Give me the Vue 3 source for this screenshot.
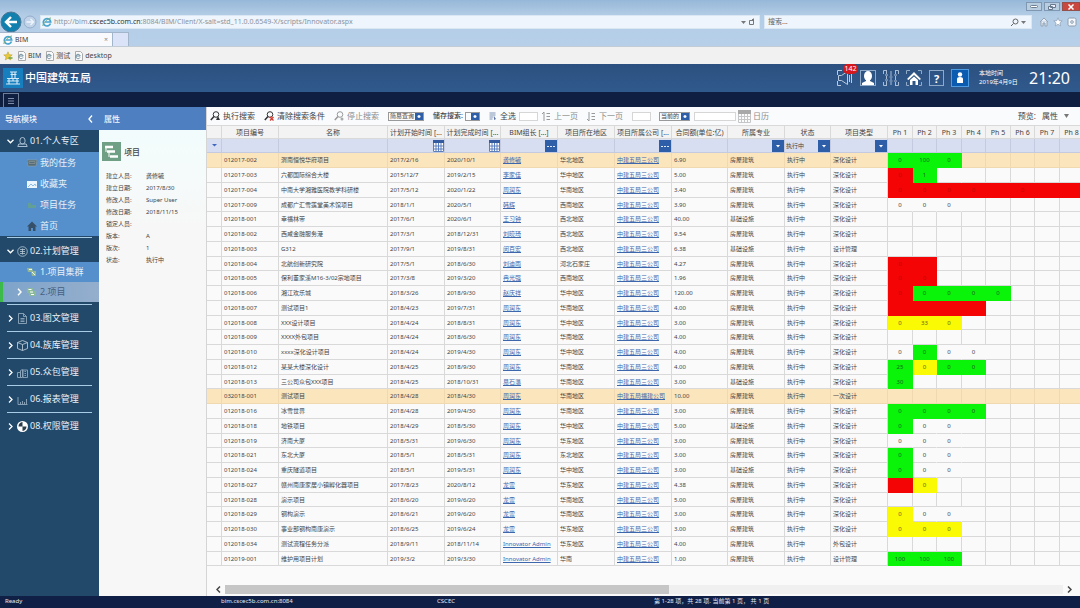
<script setup>
import { ref } from 'vue'

const query = ref('')
const currentStatus = ref('执行中')

const tasks = [
  { icon: 'inbox', label: '我的任务' },
  { icon: 'mail', label: '收藏夹' },
  { icon: 'leaf', label: '项目任务' },
  { icon: 'house', label: '首页' },
]

const modules = [
  { icon: 'doc', label: '03.图文管理' },
  { icon: 'cube', label: '04.族库管理' },
  { icon: 'city', label: '05.众包管理' },
  { icon: 'chart', label: '06.报表管理' },
  { icon: 'shield', label: '08.权限管理' },
]

const props = [
  ['建立人员:', '龚修毓'],
  ['建立日期:', '2017/8/30'],
  ['修改人员:', 'Super User'],
  ['修改日期:', '2018/11/15'],
  ['锁定人员:', ''],
  ['版本:', 'A'],
  ['版次:', '1'],
  ['状态:', '执行中'],
]

const columns = [
  { label: '', width: 15, filter: 'toggle' },
  { label: '项目编号', width: 57 },
  { label: '名称', width: 109 },
  { label: '计划开始时间 [...', width: 57, filter: 'date' },
  { label: '计划完成时间 [...', width: 56, filter: 'date' },
  { label: 'BIM组长 [...]', width: 57, filter: 'more' },
  { label: '项目所在地区', width: 57 },
  { label: '项目所属公司 [...', width: 57, filter: 'more' },
  { label: '合同额(单位:亿)', width: 56 },
  { label: '所属专业', width: 57, filter: 'list' },
  { label: '状态', width: 46, filter: 'status' },
  { label: '项目类型', width: 57, filter: 'list' },
  ...[25, 24, 25, 24, 25, 24, 25, 24].map((width, i) => ({ label: `Ph ${i + 1}`, width })),
]
const tableWidth = columns.reduce((sum, c) => sum + c.width, 0)

const H = '房屋建筑'
const J = '基础设施'
const S = '深化设计'
const C = '中建五局三公司'
// code, name, start, finish, leader, region, company, amount, discipline, type, phases
const rows = [
  ['012017-002', '渭南恒悦华府项目', '2017/2/16', '2020/10/1', '龚修毓', '华北地区', C, '6.90', H, S, 'g0 g100 g0'],
  ['012017-003', '六都国际综合大楼', '2015/12/7', '2019/2/15', '李家佳', '华中地区', C, '5.00', H, S, 'r0 g1 w'],
  ['012017-004', '中南大学湘雅医院教学科研楼', '2017/5/12', '2020/1/22', '周润东', '华南地区', C, '3.40', H, S, 'r0 r0 r0 r0 r r0 r r'],
  ['012017-009', '成都广汇雪莲堂美术馆项目', '2018/1/1', '2020/5/1', '韩辉', '西南地区', C, '3.90', H, S, 'w0 w0 w0'],
  ['012018-001', '幸福林带', '2017/6/1', '2020/6/1', '王习钟', '西北地区', C, '40.00', J, S, ''],
  ['012018-002', '西咸金融服务港', '2017/3/1', '2018/12/31', '刘晓琦', '西北地区', C, '9.54', H, S, ''],
  ['012018-003', 'G312', '2017/9/1', '2019/8/31', '闵百宏', '西北地区', C, '6.38', J, '设计管理', ''],
  ['012018-004', '北航创新研究院', '2017/5/1', '2018/6/30', '刘迪雨', '河北石家庄', C, '4.27', H, S, 'r0 r'],
  ['012018-005', '保利董家溪M16-3/02宗地项目', '2017/3/8', '2019/3/20', '冉光强', '西南地区', C, '1.96', H, S, 'r0 r0'],
  ['012018-006', '湘江欢乐城', '2018/3/26', '2018/9/30', '赵庆祥', '华中地区', C, '120.00', H, S, 'r0 g0 g0 g0 g0'],
  ['012018-007', '测试项目1', '2018/4/23', '2019/7/31', '周润东', '华南地区', C, '4.00', H, S, 'r r r r'],
  ['012018-008', 'XXX设计项目', '2018/4/24', '2018/8/31', '周润东', '华中地区', C, '3.00', H, S, 'y0 y33 y0'],
  ['012018-009', 'XXXX外包项目', '2018/4/24', '2018/6/30', '周润东', '华南地区', C, '4.00', H, S, ''],
  ['012018-010', 'xxxx深化设计项目', '2018/4/24', '2019/4/30', '周润东', '华中地区', C, '4.00', H, S, 'w0 g0 w0 w0'],
  ['012018-012', '某某大楼深化设计', '2018/4/25', '2018/9/30', '周润东', '华南地区', C, '4.00', H, S, 'g25 y0 g0 g0'],
  ['012018-013', '三公司众包XXX项目', '2018/4/25', '2018/10/31', '易石藩', '华南地区', C, '3.00', J, S, 'g30'],
  ['032018-001', '测试项目', '2018/4/28', '2018/4/30', '周润东', '华南地区', '中建五局福建公司', '10.00', H, '一次设计', ''],
  ['012018-016', '冰雪世界', '2018/4/28', '2019/4/30', '周润东', '华南地区', C, '3.00', H, S, 'g0 g0 g0 g0'],
  ['012018-018', '地铁项目', '2018/4/29', '2018/5/30', '周润东', '华中地区', C, '5.00', J, S, 'g0 w0 w0'],
  ['012018-019', '济南大厦', '2018/5/31', '2019/6/30', '周润东', '华东地区', C, '3.00', H, S, 'w0 w0 w0'],
  ['012018-021', '东北大厦', '2018/5/1', '2018/5/31', '周润东', '东北地区', C, '3.00', H, S, 'g0 w0 w0'],
  ['012018-024', '重庆隧道项目', '2018/5/1', '2019/5/31', '周润东', '华中地区', C, '3.00', J, S, 'g0 w0 w0'],
  ['012018-027', '赣州南康家居小镇孵化器项目', '2017/8/23', '2020/8/12', '龙雷', '华东地区', C, '4.38', H, S, 'r y0'],
  ['012018-028', '演示项目', '2018/6/20', '2019/6/20', '龙雷', '华南地区', C, '5.00', H, S, ''],
  ['012018-029', '钢构演示', '2018/6/21', '2019/6/20', '龙雷', '华南地区', C, '3.00', H, S, 'y0 w0 w0'],
  ['012018-030', '事业部钢构南康演示', '2018/6/25', '2019/6/24', '龙雷', '华东地区', C, '3.00', H, S, 'y0 y0 y0'],
  ['012018-034', '测试流程任务分派', '2018/9/11', '2018/11/14', 'Innovator Admin', '华东地区', C, '4.00', H, '外包设计', ''],
  ['012019-001', '维护用项目计划', '2019/3/2', '2019/3/30', 'Innovator Admin', '华南', C, '1.00', H, '设计管理', 'g100 g100 g100'],
].map((r) => {
  const phases = r[10].split(' ')
  return {
    cells: [r[0], r[1], r[2], r[3], r[4], r[5], r[6], r[7], r[8], '执行中', r[9]],
    phases: Array.from({ length: 8 }, (_, i) => ({
      tone: phases[i] ? phases[i][0] : '',
      value: phases[i] ? phases[i].slice(1) : '',
    })),
    marked: r[0] === '012017-002' || r[0] === '032018-001',
  }
})
const isLink = (i) => i === 4 || i === 6
</script>

<template>
  <div class="window">
    <div class="browser">
      <div class="titlebar">
        <button class="win" aria-label="最小化"><svg width="8" height="5" viewBox="0 0 8 5"><rect x=".5" y="1.5" width="7" height="2" rx="1" fill="#fff" stroke="#6d7f92" /></svg></button>
        <button class="win" aria-label="还原"><svg width="8" height="6" viewBox="0 0 8 6"><path d="M2.5 .5h5v3h-5zM.5 2.5h4v3h-4z" fill="#eef" stroke="#65788c" /></svg></button>
        <button class="win close" aria-label="关闭"><svg width="8" height="6" viewBox="0 0 8 6"><path d="M1.5 .5l5 5M6.500 .5l-5 5" stroke="#fff" stroke-width="1.500" /></svg></button>
      </div>
      <div class="navbar">
        <button class="back" aria-label="后退"><svg width="22" height="22" viewBox="0 0 22 22"><circle cx="11" cy="11" r="10" fill="#1180ae" stroke="#4a7795" /><path d="M17 11H6M11 6l-5 5 5 5" fill="none" stroke="#fff" stroke-width="2.400" /></svg></button>
        <button class="forward" aria-label="前进"><svg width="14" height="14" viewBox="0 0 14 14"><circle cx="7" cy="7" r="6" fill="#c0d3e8" stroke="#95adc9" /><path d="M3.500 7h7M7.500 4l3 3-3 3" fill="none" stroke="#eef5fc" stroke-width="1.300" /></svg></button>
        <div class="address">
          <svg width="10" height="10" viewBox="0 0 10 10"><path d="M8.500 6.500A3.700 3.700 0 1 1 8.700 5H3" fill="none" stroke="#47a3cf" stroke-width="1.700" /><path d="M1 9c-1-2 5-8 8-8" fill="none" stroke="#7bab7c" /></svg>
          <span class="url">http://bim.<b>cscec5b.com.cn</b>:8084/BIM/Client/X-salt=std_11.0.0.6549-X/scripts/Innovator.aspx</span>
          <svg width="5" height="3" viewBox="0 0 5 3"><path d="M0 0h5L2.500 3z" fill="#777" /></svg>
          <svg width="7" height="8" viewBox="0 0 7 8"><path d="M5 2.500H1.500v4H5.500V1M5.500 .5l-2 2" fill="none" stroke="#777" /></svg>
        </div>
        <div class="websearch">
          <input v-model="query" aria-label="搜索" placeholder="搜索..." />
          <svg width="9" height="9" viewBox="0 0 9 9"><circle cx="5.500" cy="3.500" r="2.500" fill="none" stroke="#666" /><path d="M3.500 5.500L1 8" stroke="#666" /></svg>
          <svg width="5" height="3" viewBox="0 0 5 3"><path d="M0 0h5L2.500 3z" fill="#777" /></svg>
        </div>
        <div class="tools">
          <svg width="10" height="10" viewBox="0 0 10 10"><path d="M1 5l4-4 4 4M2 4.500V9h2V6h2v3h2V4.500" fill="#e9eff5" stroke="#94a3b4" /></svg>
          <svg width="10" height="10" viewBox="0 0 10 10"><path d="M5 .8l1.200 2.900 3 .2-2.300 2 .8 3L5 7.300l-2.700 1.600 .8-3-2.300-2 3-.2z" fill="#fff" stroke="#8d9db0" stroke-width=".7" /></svg>
          <svg width="10" height="10" viewBox="0 0 10 10"><rect x="1" y="1" width="8" height="8" rx="1.500" fill="#f3f6fa" stroke="#8d9db0" /><circle cx="5" cy="5" r="1.300" fill="none" stroke="#8d9db0" /></svg>
        </div>
      </div>
      <div class="tabs">
        <div class="tab">
          <svg width="10" height="10" viewBox="0 0 10 10"><path d="M8.500 6.500A3.700 3.700 0 1 1 8.700 5H3" fill="none" stroke="#47a3cf" stroke-width="1.700" /><path d="M1 9c-1-2 5-8 8-8" fill="none" stroke="#7bab7c" /></svg>
          <span>BIM</span>
          <button aria-label="关闭标签页">×</button>
        </div>
        <button class="newtab" aria-label="新建标签页"></button>
      </div>
      <div class="favs">
        <svg width="10" height="10" viewBox="0 0 10 10"><path d="M5 .8l1.200 2.900 3 .2-2.300 2 .8 3L5 7.300l-2.700 1.600 .8-3-2.300-2 3-.2z" fill="#e8c93c" stroke="#c1a22e" stroke-width=".6" /><path d="M5.500 7h4" stroke="#6ba43c" stroke-width="1.500" /></svg>
        <a v-for="f in ['BIM', '测试', 'desktop']" :key="f" href="#">
          <svg width="9" height="10" viewBox="0 0 9 10"><path d="M1.500 .5h5l2 2v7h-7z" fill="#fafafa" stroke="#aaa" /><path d="M6 6.500A2.200 2.200 0 1 1 6.200 5H2" fill="none" stroke="#6b8c9c" /></svg>{{ f }}
        </a>
      </div>
    </div>

    <header class="apphead">
      <svg class="logo" width="20" height="20" viewBox="0 0 20 20"><rect width="20" height="20" fill="#177fbd" /><path d="M7 4h7M7.500 6.500h6M9 4v6M12 4v6M4 10.500h12M4 13h12M3 16h14M6 10.500V16M10 10.500V13M14 10.500V16" stroke="#d3eafa" stroke-width="1.100" /></svg>
      <h1>中国建筑五局</h1>
      <div class="actions">
        <button class="alarm" aria-label="通知">
          <svg width="16" height="16" viewBox="0 0 16 16"><path d="M.5 5V.5H5M.5 11v4.500H4M1.500 5.500h3l6-4v13l-6-4h-3zM12.500 5v7M14.500 4v9" fill="none" stroke="#b9cbe0" /></svg>
          <span class="badge">142</span>
        </button>
        <button aria-label="联系人"><svg width="16" height="16" viewBox="0 0 16 16"><rect x=".5" y=".5" width="15" height="15" fill="none" stroke="#8fa9c8" /><ellipse cx="8" cy="6" rx="4" ry="5" fill="#fff" /><path d="M6 9h4v2l4 2v2H2v-2l4-2z" fill="#fff" /></svg></button>
        <button aria-label="设置"><svg width="16" height="16" viewBox="0 0 16 16"><path d="M.5 4V.5H4M12 .5h3.500V4M.5 12v3.500H4M12 15.500h3.500V12M3.500 1v3M3.500 6v3M3.500 11v4M8 1v5M8 8v2M8 12v3M12.500 1v3M12.500 6v4M12.500 12v3M2 5h3M2 10h3M6.500 7h3M6.500 11h3M11 5h3M11 11h3" fill="none" stroke="#a9bdd6" /></svg></button>
        <button aria-label="主页"><svg width="16" height="16" viewBox="0 0 16 16"><path d="M.5 4V.5H4M12 .5h3.500V4M.5 12v3.500H3M13 15.500h2.500V12" fill="none" stroke="#8fa9c8" /><path d="M1 9l7-7 7 7-1.500 1L8 5 2.500 10zM4 10l4-3.500L12 10v5H9.500v-4h-3v4H4z" fill="#fff" /></svg></button>
        <button class="help" aria-label="帮助">?</button>
        <button aria-label="当前用户"><svg width="18" height="18" viewBox="0 0 18 18"><rect x=".5" y=".5" width="17" height="17" fill="#0b5cb0" stroke="#4f9be2" /><circle cx="9" cy="5.500" r="2.200" fill="#fff" /><path d="M6 14V10q0-2 3-2t3 2v4z" fill="#fff" /></svg></button>
      </div>
      <div class="date"><span>本地时间</span><span>2019年4月9日</span></div>
      <time>21:20</time>
    </header>
    <div class="strip"><button aria-label="菜单"><svg width="6" height="6" viewBox="0 0 6 6"><path d="M0 .5h6M0 3h6M0 5.500h6" stroke="#9aa8c4" stroke-width=".8" /></svg></button></div>

    <div class="body">
      <nav class="side">
        <div class="panelhead"><span>导航模块</span><svg width="5" height="8" viewBox="0 0 5 8"><path d="M4 .5L1 4l3 3.500" fill="none" stroke="#fff" stroke-width="1.300" /></svg></div>
        <a class="group" href="#">
          <svg class="chev" width="7" height="5" viewBox="0 0 7 5"><path d="M.5 .8l3 3 3-3" fill="none" stroke="#fff" stroke-width="1.300" /></svg>
          <svg class="gi" width="11" height="11" viewBox="0 0 11 11"><path d="M3 4a2.500 2.500 0 0 1 5 0v1.500a2.500 2.500 0 0 1-5 0zM.8 10.500l1-2.500h7.400l1 2.500z" fill="none" stroke="#a9bfd1" /></svg>
          01.个人专区
        </a>
        <div class="sub">
          <a v-for="t in tasks" :key="t.label" class="item task" href="#">
            <svg class="gi" width="10" height="10" viewBox="0 0 10 10">
              <path v-if="t.icon === 'inbox'" d="M0 2h10l-1 6H1zM2 3.500h6v2H2z" fill="#566b78" stroke="#94a19e" stroke-width=".6" />
              <g v-else-if="t.icon === 'mail'"><rect y="2" width="10" height="7" fill="#eaf5ff" /><path d="M1 8l3-3 2 2 2-2 1 2" fill="none" stroke="#8dbbe4" /></g>
              <path v-else-if="t.icon === 'leaf'" d="M1 8V3h3v2h5v3z" fill="#629f97" />
              <path v-else d="M0 5.500L5 .5l5 5H8.500V10H6V7H4v3H1.500V5.500z" fill="#37506a" />
            </svg>
            {{ t.label }}
          </a>
        </div>
        <hr />
        <a class="group" href="#">
          <svg class="chev" width="7" height="5" viewBox="0 0 7 5"><path d="M.5 .8l3 3 3-3" fill="none" stroke="#fff" stroke-width="1.300" /></svg>
          <svg class="gi" width="11" height="11" viewBox="0 0 11 11"><circle cx="5.500" cy="5.500" r="4.800" fill="none" stroke="#b9cad8" stroke-width=".8" /><path d="M3 3.500h5M3 5.500h5M3 7.500h5M5.500 2.500v6" stroke="#b9cad8" stroke-width=".8" /></svg>
          02.计划管理
        </a>
        <a class="item plan" href="#">
          <svg class="gi" width="10" height="10" viewBox="0 0 10 10"><path d="M0 1h5l1 3h3v5H5L4 5H1z" fill="#94b895" /><path d="M2 2.500h3M5 5l3 3" stroke="#eef8ee" /></svg>1.项目集群
        </a>
        <a class="item current" href="#">
          <svg class="chev" width="5" height="8" viewBox="0 0 5 8"><path d="M1 .8L4 4 1 7.200" fill="none" stroke="#fff" stroke-width="1.400" /></svg>
          <svg class="gi" width="10" height="10" viewBox="0 0 10 10"><path d="M0 1h6v3h3v5H2V6H0z" fill="#8aba99" /><path d="M1.500 2.500h3M3 5h3M4 7.500h3" stroke="#fff" /></svg>2.项目
        </a>
        <div class="closed">
          <a v-for="m in modules" :key="m.label" class="group" href="#">
            <svg class="chev" width="5" height="7" viewBox="0 0 5 7"><path d="M1 .5l3 3-3 3" fill="none" stroke="#fff" stroke-width="1.300" /></svg>
            <svg class="gi" width="11" height="11" viewBox="0 0 11 11" fill="none" stroke="#8fa8bd" stroke-width=".9">
              <path v-if="m.icon === 'doc'" d="M1.500 .5h5l3 3v7h-8zM6.500 .5v3h3M3.500 5.500h4M3.500 7h4M3.500 8.500h4" />
              <path v-else-if="m.icon === 'cube'" d="M5.500 .5l5 2v6l-5 2-5-2v-6zM.5 2.500l5 2 5-2M5.500 4.500v6" stroke="#b7c7d4" />
              <path v-else-if="m.icon === 'city'" d="M.5 10.500v-5h3v5zM3.500 10.500v-7l2-1v8zM6 10.500V3h4.500v7.500zM7.500 4.500h1.500M7.500 6.500h1.500M7.500 8.500h1.500" />
              <path v-else-if="m.icon === 'chart'" d="M1 3v7.500h9.500M3.500 10V8M5.500 10V7M7.500 10V8M9.500 10V5" />
              <g v-else stroke="none"><circle cx="5.500" cy="5.500" r="5.500" fill="#fff" /><path d="M5.500 1v4.500H1.500C1.500 3 3 1.500 5.500 1zM5.500 5.500h4C9.500 8 8 9.500 5.500 10z" fill="#2b3b4a" /></g>
            </svg>
            {{ m.label }}
          </a>
        </div>
      </nav>

      <aside class="detail">
        <div class="panelhead">属性</div>
        <div class="kind">
          <svg width="19" height="19" viewBox="0 0 19 19"><rect width="19" height="19" fill="#6fa086" /><path d="M3 5h8M5 9.500h8M8 14.500h8" stroke="#fff" stroke-width="2.600" /><path d="M4 6v4M7 10v5" stroke="#fff" /></svg>
          <h2>项目</h2>
        </div>
        <dl>
          <div v-for="p in props" :key="p[0]"><dt>{{ p[0] }}</dt><dd>{{ p[1] }}</dd></div>
        </dl>
      </aside>

      <main class="main">
        <div class="toolbar">
          <button class="cmd"><svg width="10" height="10" viewBox="0 0 10 10"><circle cx="6" cy="3.500" r="2.800" fill="none" stroke="#333" /><path d="M4 5.500L.8 9" stroke="#333" stroke-width="1.500" /><path d="M8 5l2 4H6z" fill="#333" /></svg>执行搜索</button>
          <button class="cmd"><svg width="10" height="10" viewBox="0 0 10 10"><circle cx="6" cy="3.500" r="2.800" fill="none" stroke="#333" /><path d="M4 5.500L.8 9" stroke="#333" stroke-width="1.500" /><path d="M6 6l3.500 3.500M9.500 6L6 9.500" stroke="#d23a30" stroke-width="1.300" /></svg>清除搜索条件</button>
          <button class="cmd off"><svg width="10" height="10" viewBox="0 0 10 10"><circle cx="6" cy="3.500" r="2.800" fill="none" stroke="#999" /><path d="M4 5.500L.8 9" stroke="#999" stroke-width="1.500" /><circle cx="8" cy="8" r="1.500" fill="#aaa" /></svg>停止搜索</button>
          <label class="pick wide"><select aria-label="查询方式"><option>简易查询</option></select><i></i></label>
          <label class="saved" for="saved">储存搜索:</label>
          <label class="pick tiny"><select id="saved"><option></option></select><i></i></label>
          <button class="cmd all"><svg width="8" height="9" viewBox="0 0 8 9"><path d="M.5 1h6M.5 3h6M.5 5h4M.5 7h3" stroke="#7e92b5" /><path d="M5 4v4l2-1z" fill="#5f76a5" /></svg>全选</button>
          <input class="num" aria-label="每页数量" />
          <button class="cmd off prev"><svg width="9" height="9" viewBox="0 0 9 9"><path d="M2 0v9M0 2l2-2M4.500 1.500H8M4.500 4.500H8M4.500 7.500H8" stroke="#999" fill="none" /></svg>上一页</button>
          <button class="cmd off"><svg width="9" height="9" viewBox="0 0 9 9"><path d="M2 0v9M0 7l2 2M4.500 1.500H8M4.500 4.500H8M4.500 7.500H8" stroke="#999" fill="none" /></svg>下一页</button>
          <input class="num" aria-label="页码" />
          <label class="pick now"><select aria-label="版本"><option>当前的</option></select><i></i></label>
          <input class="day" aria-label="日期" />
          <button class="cmd off cal"><svg width="13" height="13" viewBox="0 0 13 13"><rect width="13" height="4" fill="#a8a8a8" /><path d="M.5 4v8.500h12V4M.5 6.500h12M.5 9.500h12M3.500 4v8.500M6.500 4v8.500M9.500 4v8.500" fill="none" stroke="#c6c6c6" /></svg>日历</button>
          <button class="preview"><span>预览:</span><span>属性</span><svg width="5" height="4" viewBox="0 0 5 4"><path d="M0 0h5L2.500 4z" fill="#777" /></svg></button>
        </div>

        <div class="scroller">
          <table :style="{ width: tableWidth + 'px' }">
            <colgroup><col v-for="(c, i) in columns" :key="i" :style="{ width: c.width + 'px' }" /></colgroup>
            <thead>
              <tr><th v-for="(c, i) in columns" :key="i">{{ c.label }}</th></tr>
              <tr class="filter">
                <td v-for="(c, i) in columns" :key="i">
                  <div v-if="c.filter" class="fcell">
                    <svg v-if="c.filter === 'toggle'" class="dash" width="5" height="3" viewBox="0 0 5 3"><path d="M0 0h5L2.500 2.500z" fill="#3d67c0" /></svg>
                    <button v-else-if="c.filter === 'date'" :aria-label="c.label"><svg width="11" height="12" viewBox="0 0 11 12"><rect width="11" height="12" fill="#fff" /><rect width="11" height="3" fill="#345a9f" /><path d="M.5 3v8.500h10V3M.5 6h10M.5 9h10M3 3v8.500M5.500 3v8.500M8 3v8.500" fill="none" stroke="#5c7fbe" /></svg></button>
                    <button v-else-if="c.filter === 'more'" :aria-label="c.label"><svg width="12" height="12" viewBox="0 0 12 12"><rect width="12" height="12" fill="#2f5ea8" /><path d="M2 6.500h2M5 6.500h2M8 6.500h2" stroke="#dfe8f7" /></svg></button>
                    <template v-else>
                      <select v-if="c.filter === 'status'" v-model="currentStatus" aria-label="状态筛选"><option>执行中</option></select>
                      <select v-else :aria-label="c.label + '筛选'"><option></option></select>
                      <svg class="drop" width="12" height="12" viewBox="0 0 12 12"><rect width="12" height="12" fill="#2f5ea8" /><path d="M4 5h4L6 7.500z" fill="#fff" /></svg>
                    </template>
                  </div>
                </td>
              </tr>
            </thead>
            <tbody>
              <tr v-for="r in rows" :key="r.cells[0]" :class="{ marked: r.marked }">
                <td></td>
                <td v-for="(v, i) in r.cells" :key="i"><a v-if="isLink(i)" href="#">{{ v }}</a><template v-else>{{ v }}</template></td>
                <td v-for="(p, i) in r.phases" :key="'p' + i" class="ph" :class="p.tone">{{ p.value }}</td>
              </tr>
            </tbody>
          </table>
        </div>

        <div class="hscroll">
          <svg width="5" height="7" viewBox="0 0 5 7"><path d="M4 .5l-3 3 3 3" fill="none" stroke="#444" stroke-width="1.500" /></svg>
          <div class="track"><div class="thumb"></div></div>
          <svg width="5" height="7" viewBox="0 0 5 7"><path d="M1 .5l3 3-3 3" fill="none" stroke="#444" stroke-width="1.500" /></svg>
        </div>
      </main>
    </div>

    <footer class="status">
      <span>Ready</span><span>bim.cscec5b.com.cn:8084</span><span>CSCEC</span><span>第 1-28 项，共 28 项. 当前第 1 页， 共 1 页</span>
    </footer>
  </div>
</template>

<style>
body {
  margin: 0;
}
</style>

<style scoped>
.window {
  display: flex;
  flex-direction: column;
  min-height: 100vh;
  overflow: hidden;
  background: #f7f7f7;
  font-family: "Noto Sans", "Noto Sans CJK SC", sans-serif;
  font-size: 7px;
  line-height: 12px;
  color: #444;
}
* {
  box-sizing: border-box;
}
svg {
  display: block;
  flex: none;
}
button,
input,
select {
  font: inherit;
  color: inherit;
  background: none;
  border: 0;
  border-radius: 0;
  padding: 0;
  margin: 0;
  appearance: none;
}
a {
  color: inherit;
  text-decoration: none;
}

/* browser chrome */
.browser {
  background: linear-gradient(#96b8d8, #b4cde6 16px, #b9d1ea);
}
.titlebar {
  display: flex;
  justify-content: flex-end;
  gap: 2px;
  height: 12px;
  padding-top: 2px;
}
.win {
  display: flex;
  align-items: center;
  justify-content: center;
  width: 16px;
  height: 9px;
  border: 1px solid #7f97b1;
  background: #b9cde0;
}
.win.close {
  width: 18px;
  background: #c9473c;
  border-color: #94504c;
}
.navbar {
  display: flex;
  align-items: center;
  height: 20px;
}
.back {
  width: 22px;
}
.forward {
  margin: 0 3px 0 1px;
}
.address,
.websearch {
  display: flex;
  align-items: center;
  height: 14px;
  background: #eef5fc;
  border: 1px solid #dbe7f3;
}
.address {
  flex: 1;
  gap: 2px;
  padding: 0 4px 0 1px;
}
.url {
  flex: 1;
  white-space: nowrap;
  color: #8b939c;
}
.url b {
  font-weight: 400;
  color: #333;
}
.websearch {
  width: 268px;
  margin-left: 4px;
  padding: 0 5px 0 3px;
  gap: 2px;
}
.websearch input {
  flex: 1;
  min-width: 0;
}
.websearch input::placeholder {
  color: #666;
}
.tools {
  display: flex;
  justify-content: space-between;
  width: 48px;
  padding: 0 3px 0 7px;
}
.tabs {
  display: flex;
  height: 14px;
}
.tab {
  display: flex;
  align-items: center;
  gap: 2px;
  width: 113px;
  padding: 0 4px 0 3px;
  background: #f8fafe;
  border: 1px solid #a3b5ca;
  border-width: 1px 1px 0 0;
}
.tab span {
  flex: 1;
}
.tab button {
  color: #888;
}
.newtab {
  width: 16px;
  background: #dbe3f8;
  border: 1px solid #a3b5ca;
  border-width: 1px 1px 0 0;
}
.favs {
  display: flex;
  align-items: center;
  gap: 4px;
  height: 18px;
  padding-left: 3px;
  background: #f1f1f1;
  border-top: 1px solid #c3ccd5;
}
.favs a {
  display: flex;
  align-items: center;
  gap: 2px;
}

/* application header */
.apphead {
  display: flex;
  align-items: center;
  height: 28px;
  padding: 0 10px 0 3px;
  background: linear-gradient(#2c5180, #30598c);
  color: #fff;
}
h1 {
  flex: 1;
  margin: 0 0 0 2px;
  font-size: 11px;
  line-height: 16px;
  font-weight: 500;
}
.actions {
  display: flex;
  align-items: center;
  gap: 7px;
}
.alarm {
  position: relative;
}
.badge {
  position: absolute;
  left: 6px;
  top: -6px;
  width: 15px;
  border-radius: 5px;
  background: #d4181c;
  font-size: 7px;
  line-height: 10px;
}
.help {
  width: 15px;
  height: 16px;
  border: 1px solid #8fa9c8;
  font-size: 11px;
  line-height: 13px;
  font-weight: 700;
}
.date {
  display: flex;
  flex-direction: column;
  width: 60px;
  padding-left: 10px;
  font-size: 6px;
  line-height: 9px;
  white-space: nowrap;
}
time {
  font-size: 16px;
  line-height: 20px;
}
.strip {
  display: flex;
  height: 15px;
  padding: 1px 0 0 3px;
  background: #0f1f42;
}
.strip button {
  display: flex;
  align-items: center;
  justify-content: center;
  width: 16px;
  border: 1px solid #6f7d98;
  border-bottom: 0;
}

/* side panels */
.body {
  display: flex;
  flex: 1;
}
.side {
  width: 99px;
  background: #22496a;
  color: #e8f0f8;
  font-size: 9px;
}
.panelhead {
  display: flex;
  align-items: center;
  justify-content: space-between;
  height: 23px;
  padding: 0 6px 0 5px;
  background: #4d7fc1;
  color: #f1f6fc;
  font-size: 8px;
  font-weight: 500;
}
.group {
  display: flex;
  align-items: center;
  height: 22px;
  padding-left: 7px;
  white-space: nowrap;
}
.group .chev {
  width: 7px;
  margin-right: 3px;
}
.group .gi {
  margin-right: 2px;
}
.sub,
.plan {
  background: #5590cc;
}
.item {
  display: flex;
  align-items: center;
  gap: 3px;
  height: 20px;
  padding-left: 27px;
}
.item.task {
  height: 21px;
}
hr {
  margin: 1px 7px 2px;
  border: 0;
  border-top: 1px solid #a8cbe6;
}
.item.current {
  padding-left: 14px;
  background: linear-gradient(90deg, #7fa4ca, #94aecd);
  border-left: 3px solid #3dbb4a;
  color: #46607f;
}
.current .chev {
  margin-right: 2px;
}
.closed {
  padding-top: 2px;
}
.closed .group {
  height: 27px;
  margin: 0 7px;
  padding: 0;
  border-top: 1px solid #a8cbe6;
}
.detail {
  width: 107px;
  background: linear-gradient(#f2fcfc 23px, #f5fbfb 60px, #f7f7f7 120px);
}
.kind {
  display: flex;
  align-items: center;
  gap: 3px;
  padding: 12px 0 0 3px;
}
h2 {
  margin: 0;
  font-size: 8px;
  line-height: 12px;
  font-weight: 500;
}
dl {
  margin: 9px 0 0 7px;
  font-size: 6px;
}
dl div {
  display: flex;
  height: 12px;
}
dt {
  width: 40px;
}
dd {
  margin: 0;
}

/* grid */
.main {
  display: flex;
  flex-direction: column;
  flex: 1;
  min-width: 0;
  border-left: 1px solid #d5d5d5;
  background: #fafafa;
}
.toolbar {
  display: flex;
  align-items: center;
  height: 18px;
  padding-left: 3px;
  background: #f9fbfd;
  font-size: 8px;
  white-space: nowrap;
}
.cmd {
  display: flex;
  align-items: center;
  gap: 3px;
  margin-right: 9px;
}
.off {
  color: #8c8c8c;
}
.pick {
  display: flex;
  height: 9px;
  border: 1px solid #999;
  font-size: 6px;
  line-height: 7px;
}
.pick select {
  flex: 1;
  min-width: 0;
  padding-left: 1px;
}
.pick i {
  width: 8px;
  background: radial-gradient(#fff 1px, #2f5ea8 2px);
}
.pick.wide {
  width: 36px;
  margin-right: 9px;
}
.saved {
  font-size: 7px;
  font-weight: 500;
  margin-right: 2px;
}
.pick.tiny {
  width: 15px;
  margin-right: 9px;
}
.pick.now {
  width: 31px;
  margin: 0 4px 0 8px;
}
.all {
  margin-right: 3px;
}
.num,
.day {
  height: 9px;
  width: 19px;
  border: 1px solid #d6d6d6;
  background: #fff;
}
.day {
  width: 42px;
}
.prev {
  margin-left: 4px;
}
.cal {
  margin-left: 2px;
  gap: 2px;
}
.preview {
  display: flex;
  align-items: center;
  gap: 6px;
  margin: 0 11px 0 auto;
}
.scroller {
  flex: 1;
  overflow: hidden;
}
table {
  table-layout: fixed;
  border-collapse: separate;
  border-spacing: 0;
  font-size: 6px;
  line-height: 12px;
}
th,
td {
  height: 15px;
  padding: 0 0 0 2px;
  border: solid #d9d9d9;
  border-width: 0 1px 1px 0;
  text-align: left;
  white-space: nowrap;
  overflow: hidden;
}
tbody tr:nth-child(4n) td {
  height: 14px;
}
th {
  height: 14px;
  padding: 0;
  border-top-width: 1px;
  background: #f3f3f3;
  font-size: 7px;
  font-weight: 400;
  line-height: 11px;
  text-align: center;
}
.filter td {
  height: 14px;
  padding: 0;
  background: #d8def1;
  border-color: #c4cbe0;
}
.fcell {
  display: flex;
  align-items: center;
  justify-content: flex-end;
}
.fcell select {
  flex: 1;
  min-width: 0;
  padding-left: 1px;
  line-height: 12px;
}
.dash {
  margin: 0 auto;
}
td a {
  color: #3d66ad;
  text-decoration: underline;
}
.marked td {
  background: #fbe5bd;
  border-color: #f0d8b0;
}
td.ph {
  padding: 0;
  text-align: center;
}
td.g {
  background: #0af40a;
  border-color: #0af40a;
  color: #16681a;
}
td.r {
  background: #f40404;
  border-color: #f40404;
  color: #c00a0a;
}
td.y {
  background: #fafa05;
  border-color: #fafa05;
  color: #65651c;
}
td.w {
  border-right-color: #fafafa;
}
.hscroll {
  display: flex;
  align-items: center;
  gap: 4px;
  height: 14px;
  padding: 0 8px 0 9px;
}
.track {
  flex: 1;
  background: #f0f0f0;
}
.thumb {
  width: 53%;
  height: 9px;
  background: #c6c6c6;
}
.status {
  display: grid;
  grid-template-columns: 216fr 216fr 217fr 426fr;
  height: 12px;
  padding-left: 5px;
  background: #101f45;
  color: #e6eaf2;
  font-size: 6px;
  line-height: 11px;
}
</style>
